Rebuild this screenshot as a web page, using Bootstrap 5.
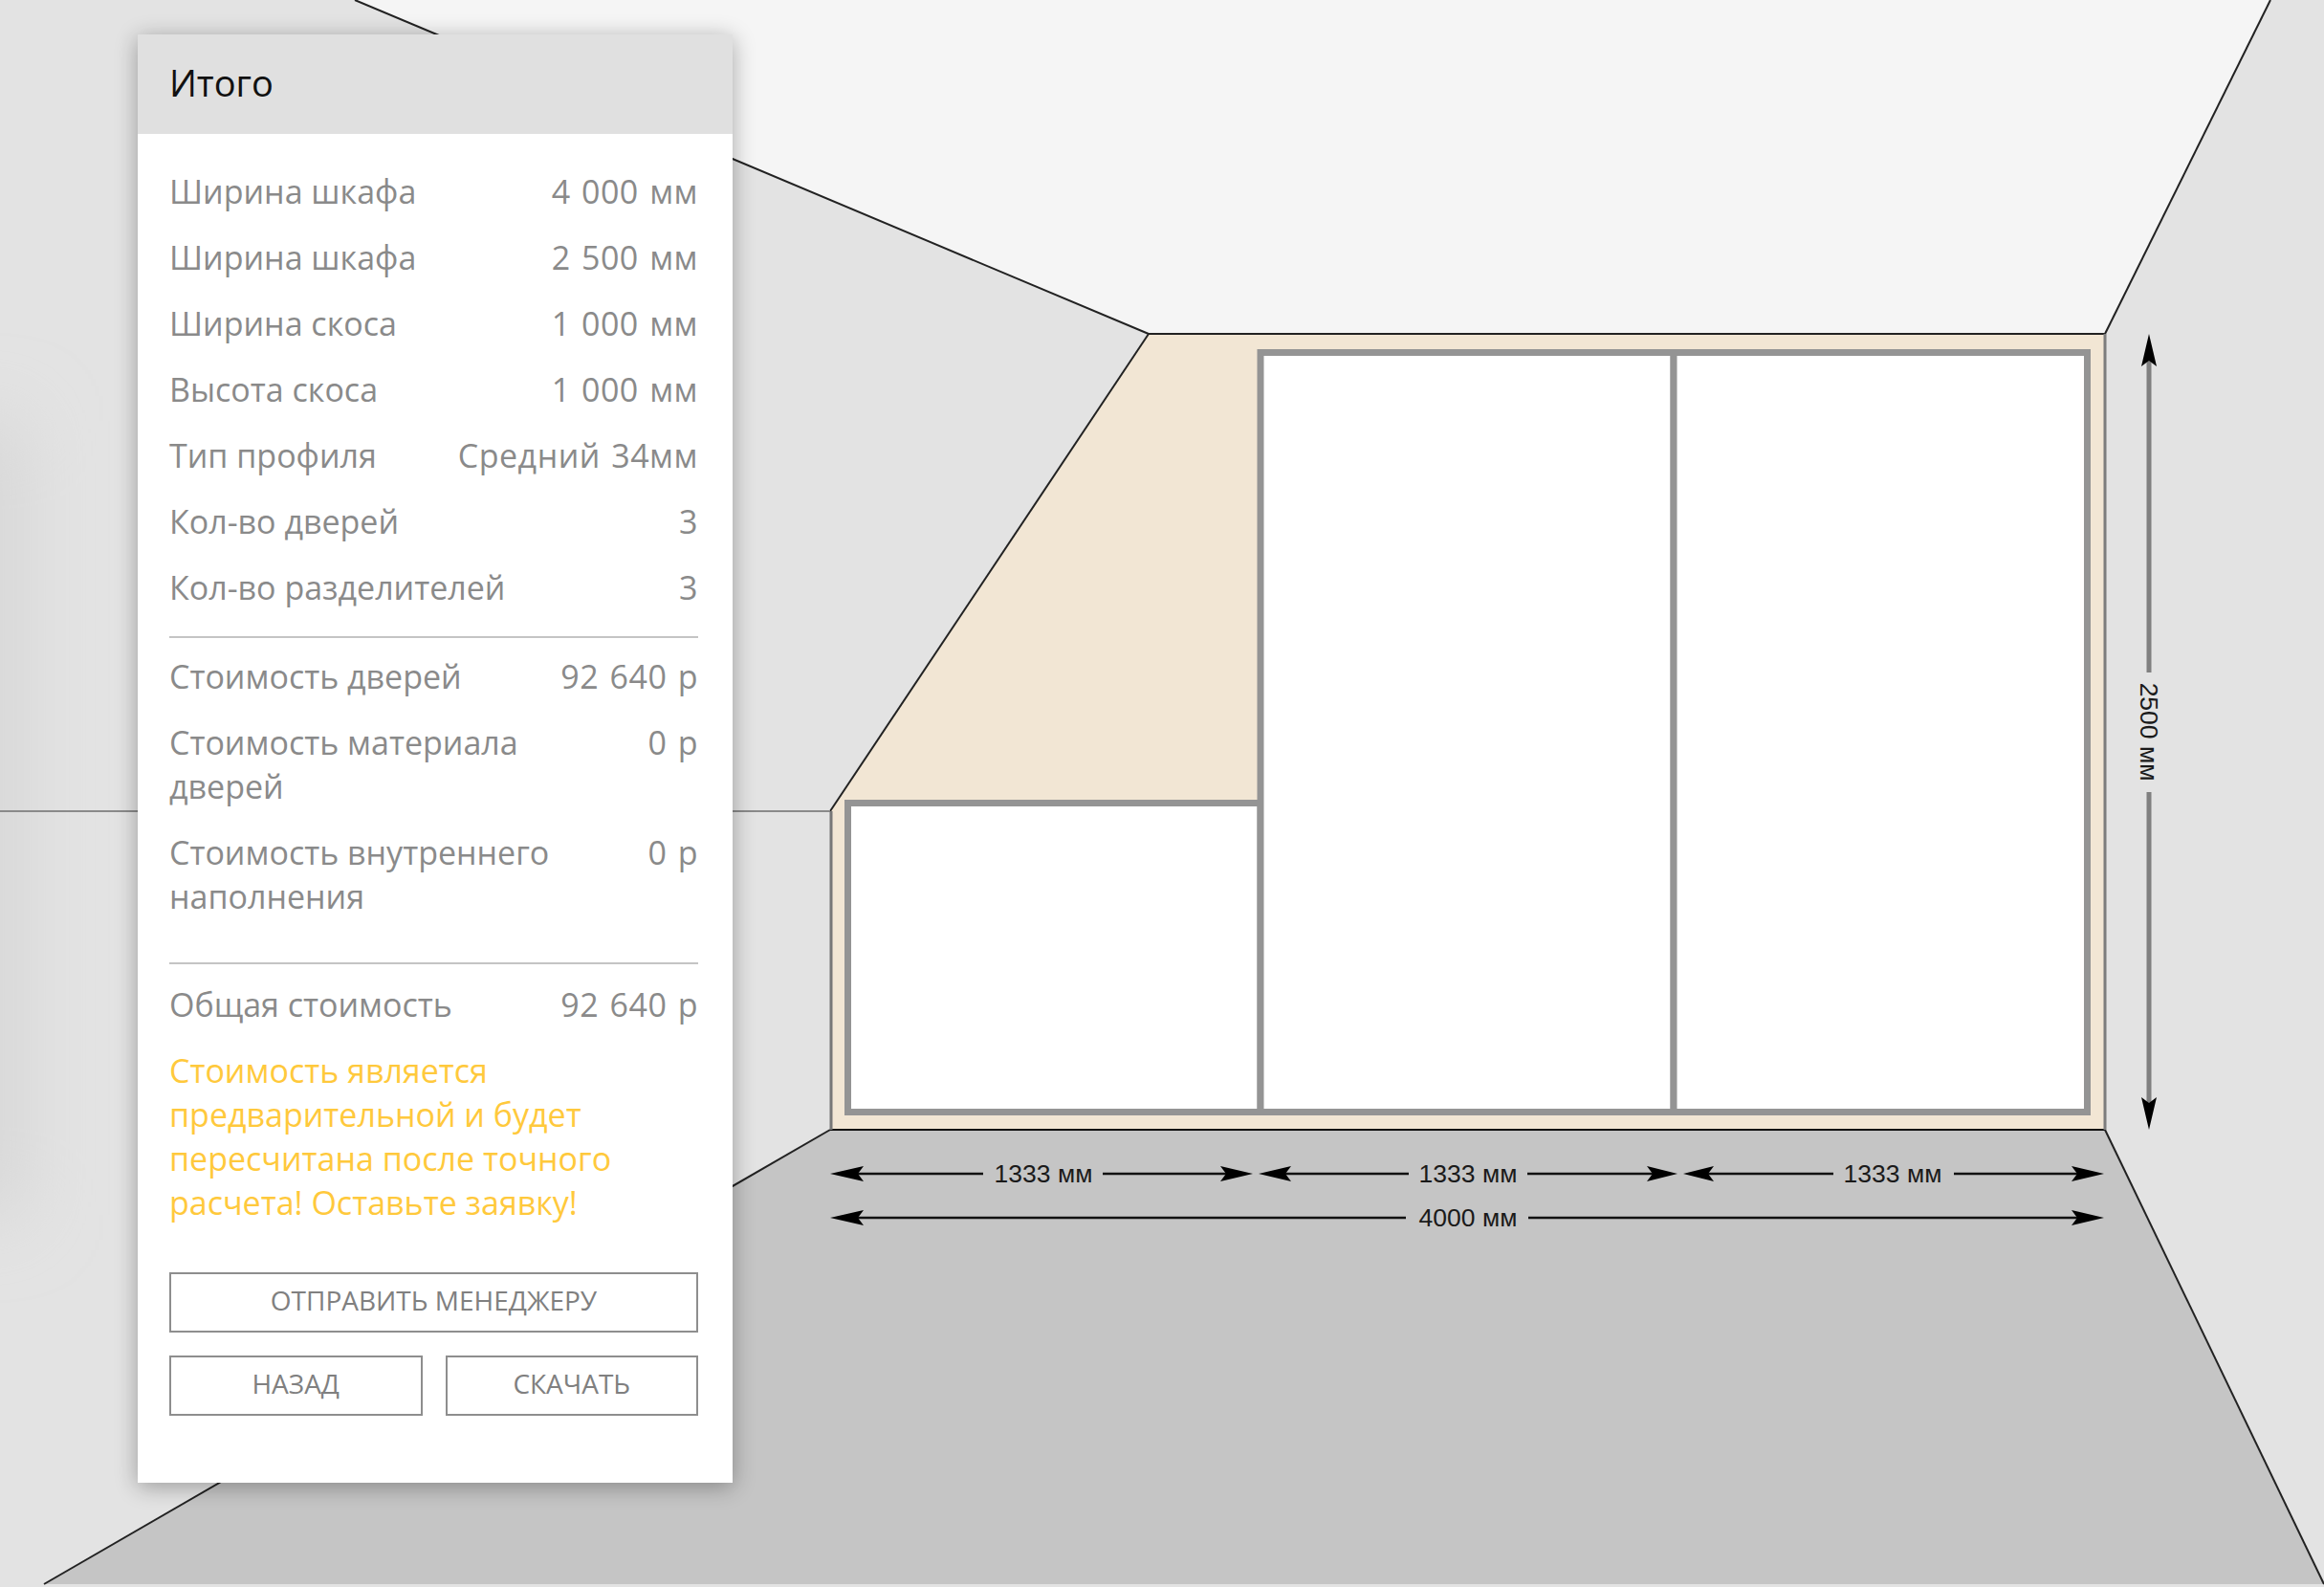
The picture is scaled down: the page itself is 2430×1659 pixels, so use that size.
<!DOCTYPE html>
<html lang="ru">
<head>
    <meta charset="UTF-8">
    <meta name="viewport" content="width=device-width, initial-scale=1.0">
    <title>Итого</title>
    <link href="https://cdn.jsdelivr.net/npm/bootstrap@5.3.3/dist/css/bootstrap.min.css" rel="stylesheet">
    <style>
        body {
            background: #e4e4e4;
            font-family: "Open Sans", "Liberation Sans", sans-serif;
        }
        .room-stage {
            width: 2430px;
            height: 1659px;
            overflow: hidden;
        }
        .room-plan {
            display: block;
        }
        .room-plan text {
            font-family: "Liberation Sans", Arial, sans-serif;
            font-size: 26.5px;
            fill: #1a1a1a;
            text-anchor: middle;
        }
        .summary-panel {
            position: absolute;
            left: 144px;
            top: 36px;
            width: 622px;
            height: 1514px;
            border: 0;
            border-radius: 0;
            box-shadow: 0 4px 22px rgba(0, 0, 0, .32);
        }
        .summary-head {
            height: 104px;
            padding: 0 33px 5px;
            background: #e0e0e0;
            border: 0;
            border-radius: 0 !important;
            color: #111;
            font-size: 38px;
            line-height: 56px;
            display: flex;
            align-items: center;
        }
        .summary-body {
            padding: 37px 36px 0 33px;
            color: #8a8a8a;
            font-size: 34px;
            line-height: 46px;
        }
        .summary-row {
            margin-bottom: 23px;
        }
        .summary-label {
            max-width: 420px;
        }
        .summary-value {
            letter-spacing: .5px;
            word-spacing: 2px;
        }
        .summary-line {
            margin: 0;
            border: 0;
            border-top: 2px solid #c4c4c4;
            opacity: 1;
        }
        .line-one {
            margin-top: 28px;
            margin-bottom: 17px;
        }
        .line-two {
            margin-top: 46px;
            margin-bottom: 19px;
        }
        .summary-note {
            color: #ffc93c;
            margin-bottom: 50px;
        }
        .summary-btn {
            height: 63px;
            padding: 0 0 6px;
            border: 2px solid #8e8e8e;
            border-radius: 0;
            background: #fff;
            color: #808080;
            font-size: 28px;
            line-height: 40px;
            text-transform: uppercase;
        }
        .btn-gap {
            gap: 24px;
        }
        .btn-stack {
            margin-bottom: 24px;
        }
    </style>
</head>
<body>
    <div class="room-stage position-relative">
        <svg class="room-plan" width="2430" height="1659" viewBox="0 0 2430 1659">
            <defs>
                <filter id="wallBlur" x="-300%" y="-30%" width="700%" height="160%">
                    <feGaussianBlur stdDeviation="40"/>
                </filter>
            </defs>

            <!-- walls, ceiling, floor -->
            <rect width="2430" height="1659" fill="#e3e3e3"/>
            <rect x="-50" y="440" width="70" height="830" fill="#d4d4d4" filter="url(#wallBlur)"/>
            <polygon points="371,0 2374,0 2201,349 1201,349" fill="#f5f5f5"/>
            <polygon points="868,1181 2201,1181 2430,1656 46,1656" fill="#c5c5c5"/>

            <!-- beige niche -->
            <polygon points="1201,349 2201,349 2201,1181 868,1181 868,848" fill="#f2e6d4"/>

            <!-- room edges -->
            <g fill="none" stroke="#222" stroke-width="2">
                <line x1="371" y1="0" x2="1201" y2="349"/>
                <line x1="2374" y1="0" x2="2201" y2="349"/>
                <line x1="1201" y1="349" x2="2201" y2="349"/>
                <line x1="1201" y1="349" x2="868" y2="848"/>
                <line x1="868" y1="1181" x2="2201" y2="1181" stroke="#111"/>
                <line x1="868" y1="1181" x2="46" y2="1656"/>
                <line x1="2201" y1="1181" x2="2430" y2="1656"/>
            </g>
            <line x1="0" y1="848" x2="868" y2="848" stroke="#8a8a8a" stroke-width="2"/>
            <line x1="869" y1="848" x2="869" y2="1181" stroke="#777" stroke-width="3"/>
            <line x1="2201" y1="349" x2="2201" y2="1181" stroke="#7d7d7d" stroke-width="3"/>

            <!-- doors -->
            <g fill="#fff" stroke="#949494" stroke-width="7">
                <rect x="886.5" y="839.5" width="431.5" height="323"/>
                <rect x="1318" y="368.5" width="432" height="794"/>
                <rect x="1750" y="368.5" width="432.5" height="794"/>
            </g>

            <!-- dimensions -->
            <g stroke="#111" stroke-width="2.5">
                <line x1="890" y1="1227" x2="1028" y2="1227"/>
                <line x1="1153" y1="1227" x2="1290" y2="1227"/>
                <line x1="1335" y1="1227" x2="1473" y2="1227"/>
                <line x1="1597" y1="1227" x2="1734" y2="1227"/>
                <line x1="1780" y1="1227" x2="1917" y2="1227"/>
                <line x1="2043" y1="1227" x2="2180" y2="1227"/>
                <line x1="890" y1="1273" x2="1470" y2="1273"/>
                <line x1="1598" y1="1273" x2="2180" y2="1273"/>
            </g>
            <g fill="#000">
                <polygon points="868,1227 903,1219 897,1227 903,1235"/>
                <polygon points="1310,1227 1276,1219 1282,1227 1276,1235"/>
                <polygon points="1316,1227 1350,1219 1344,1227 1350,1235"/>
                <polygon points="1754,1227 1722,1219 1728,1227 1722,1235"/>
                <polygon points="1760,1227 1792,1219 1786,1227 1792,1235"/>
                <polygon points="2200,1227 2166,1219 2172,1227 2166,1235"/>
                <polygon points="868,1273 903,1265 897,1273 903,1281"/>
                <polygon points="2200,1273 2166,1265 2172,1273 2166,1281"/>
            </g>
            <text x="1091" y="1236">1333 мм</text>
            <text x="1535" y="1236">1333 мм</text>
            <text x="1979" y="1236">1333 мм</text>
            <text x="1535" y="1282">4000 мм</text>

            <!-- height -->
            <g stroke="#808080" stroke-width="5">
                <line x1="2247" y1="375" x2="2247" y2="703"/>
                <line x1="2247" y1="828" x2="2247" y2="1155"/>
            </g>
            <polygon points="2247,349 2239,383 2247,377 2255,383" fill="#000"/>
            <polygon points="2247,1181 2239,1147 2247,1153 2255,1147" fill="#000"/>
            <text transform="translate(2238 765) rotate(90)">2500 мм</text>
        </svg>

        <div class="card summary-panel">
            <div class="card-header summary-head">Итого</div>
            <div class="card-body summary-body">
                <div class="d-flex justify-content-between summary-row"><span>Ширина шкафа</span><span class="summary-value">4 000 мм</span></div>
                <div class="d-flex justify-content-between summary-row"><span>Ширина шкафа</span><span class="summary-value">2 500 мм</span></div>
                <div class="d-flex justify-content-between summary-row"><span>Ширина скоса</span><span class="summary-value">1 000 мм</span></div>
                <div class="d-flex justify-content-between summary-row"><span>Высота скоса</span><span class="summary-value">1 000 мм</span></div>
                <div class="d-flex justify-content-between summary-row"><span>Тип профиля</span><span class="summary-value">Средний 34мм</span></div>
                <div class="d-flex justify-content-between summary-row"><span>Кол-во дверей</span><span class="summary-value">3</span></div>
                <div class="d-flex justify-content-between summary-row"><span>Кол-во разделителей</span><span class="summary-value">3</span></div>
                <hr class="summary-line line-one">
                <div class="d-flex justify-content-between summary-row"><span>Стоимость дверей</span><span class="summary-value">92 640 р</span></div>
                <div class="d-flex justify-content-between summary-row"><span class="summary-label">Стоимость материала дверей</span><span class="summary-value">0 р</span></div>
                <div class="d-flex justify-content-between summary-row"><span class="summary-label">Стоимость внутреннего наполнения</span><span class="summary-value">0 р</span></div>
                <hr class="summary-line line-two">
                <div class="d-flex justify-content-between summary-row"><span>Общая стоимость</span><span class="summary-value">92 640 р</span></div>
                <p class="summary-note">Стоимость является предварительной и будет пересчитана после точного расчета! Оставьте заявку!</p>
                <button type="button" class="btn summary-btn w-100 d-block btn-stack">Отправить менеджеру</button>
                <div class="d-flex btn-gap">
                    <button type="button" class="btn summary-btn flex-fill w-50">Назад</button>
                    <button type="button" class="btn summary-btn flex-fill w-50">Скачать</button>
                </div>
            </div>
        </div>
    </div>

    <script src="https://cdn.jsdelivr.net/npm/bootstrap@5.3.3/dist/js/bootstrap.bundle.min.js"></script>
</body>
</html>
